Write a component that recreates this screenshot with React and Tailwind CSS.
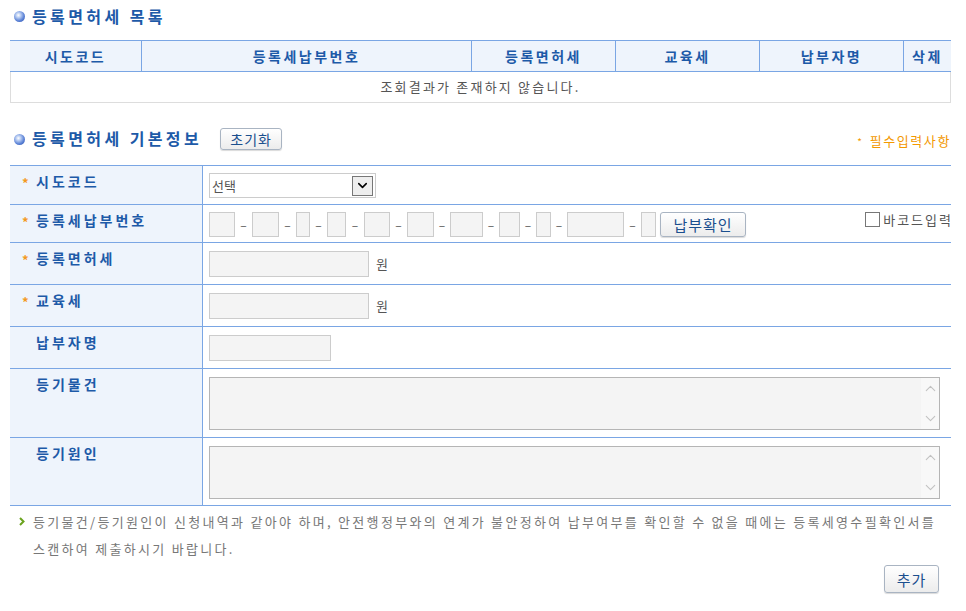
import React from "react";
import { ChevronDown, ChevronUp } from "lucide-react";

const cols = [
  { label: "시도코드", w: "w-[132px]" },
  { label: "등록세납부번호", w: "w-[330px]" },
  { label: "등록면허세", w: "w-[144px]" },
  { label: "교육세", w: "w-[144px]" },
  { label: "납부자명", w: "w-[144px]" },
  { label: "삭제", w: "w-[47px]" },
];

const boxes = [26, 27, 14, 19, 26, 27, 33, 21, 15, 57, 15];
const gaps = [17, 17, 17, 18, 17, 16, 16, 16, 16, 17];

function Bullet() {
  return (
    <span className="inline-block w-[11px] h-[11px] rounded-full bg-[radial-gradient(circle_at_40%_38%,#ffffff_0%,#b9cdf2_25%,#5b82d6_60%,#2a4fa8_100%)] shrink-0" />
  );
}

function Star() {
  return <span className="text-[#f39a1e] text-[13px] font-bold leading-none">*</span>;
}

function Btn({ children, className, style }) {
  return (
    <button
      style={style}
      className={
        "border border-[#a9b4c2] rounded-[3px] bg-[linear-gradient(#ffffff,#ececec)] shadow-[0_1px_1px_rgba(0,0,0,0.15)] text-[#1b4f8e] leading-none " +
        className
      }
    >
      {children}
    </button>
  );
}

function Input({ className, style }) {
  return <div style={style} className={"border border-[#cccccc] bg-[#f4f4f4] shrink-0 " + className} />;
}

function TextBox() {
  return (
    <div className="flex h-[53px] w-[731px] border border-[#b5b5b5] bg-[#f4f4f4]">
      <div className="flex-1" />
      <div className="w-[18px] bg-[#f8f8f8] flex flex-col items-center justify-between py-[2px]">
        <ChevronUp size={17} strokeWidth={1.5} className="text-[#c2c2c2]" />
        <ChevronDown size={17} strokeWidth={1.5} className="text-[#c2c2c2]" />
      </div>
    </div>
  );
}

function Row({ h, star, label, children }) {
  return (
    <div className={"flex border-b border-[#7aa6e4] " + h}>
      <div className="w-[193px] bg-[#eef4fc] border-r border-[#7aa6e4] flex items-start pl-[9px] pt-[6px]">
        <span className="w-[17px] leading-[18px] pl-[3px]">{star ? <Star /> : null}</span>
        <span className="text-[14px] font-bold leading-[18px] tracking-[3px] text-[#1d5aa8]">{label}</span>
      </div>
      <div className="flex-1 pl-[6px] pt-[7px]">{children}</div>
    </div>
  );
}

export default function App() {
  return (
    <div className="w-[966px] h-[611px] bg-white pl-[10px] pr-[15px] font-['Noto_Sans_CJK_KR',sans-serif]">
      <div className="flex items-center gap-[7px] h-[32px] pl-[4px]">
        <Bullet />
        <h2 className="text-[16px] font-bold tracking-[3.4px] text-[#1d5aa8] leading-none">등록면허세 목록</h2>
      </div>

      <div className="mt-[8px]">
        <div className="flex h-[32px] border-y border-[#7aa6e4] bg-[#eef4fc]">
          {cols.map((c, i) => (
            <div
              key={c.label}
              className={
                c.w +
                " flex items-center justify-center text-[14px] font-bold tracking-[2.5px] text-[#1d5aa8] " +
                (i < cols.length - 1 ? "border-r border-[#7aa6e4]" : "")
              }
            >
              {c.label}
            </div>
          ))}
        </div>
        <div className="h-[31px] border-x border-b border-[#dddddd] flex items-center justify-center text-[13px] tracking-[2.2px] text-[#555555]">
          조회결과가 존재하지 않습니다.
        </div>
      </div>

      <div className="flex items-center justify-between h-[24px] mt-[24px]">
        <div className="flex items-center gap-[7px] pl-[4px]">
          <Bullet />
          <h2 className="text-[16px] font-bold tracking-[3.4px] text-[#1d5aa8] leading-none -mt-[3px]">등록면허세 기본정보</h2>
          <Btn className="ml-[11px] w-[62px] h-[22px] text-[14px] tracking-[1px]">초기화</Btn>
        </div>
        <div className="text-[13px] text-[#f39800] tracking-[1.6px] pt-[4px]">
          <span className="text-[10px] mr-[6px]">*</span>필수입력사항
        </div>
      </div>

      <div className="mt-[14px] border-t border-[#7aa6e4]">
        <Row h="h-[39px]" star label="시도코드">
          <div className="flex items-center w-[167px] h-[25px] border border-[#cccccc] bg-white pl-[2px] pr-[2px]">
            <span className="flex-1 text-[13px] text-[#555555] leading-none">선택</span>
            <span className="w-[21px] h-[20px] border border-[#777777] bg-[#eeeeee] flex items-center justify-center">
              <ChevronDown size={15} strokeWidth={2.5} className="text-black" />
            </span>
          </div>
        </Row>
        <Row h="h-[38px]" star label="등록세납부번호">
          <div className="flex justify-between">
            <div className="flex items-center">
              {boxes.map((w, i) => (
                <React.Fragment key={i}>
                  <Input className="h-[25px]" style={{ width: w }} />
                  {i < gaps.length ? (
                    <span style={{ width: gaps[i] }} className="text-center text-[12px] text-[#555555]">
                      –
                    </span>
                  ) : null}
                </React.Fragment>
              ))}
              <Btn className="ml-[4px] w-[86px] h-[25px] text-[15px] tracking-[1px]">납부확인</Btn>
            </div>
            <label className="flex items-start gap-[3px] text-[13px] text-[#555555] leading-[15px] tracking-[2px] mr-[-2px]">
              <span className="w-[15px] h-[15px] border border-[#777777] bg-white" />
              바코드입력
            </label>
          </div>
        </Row>
        <Row h="h-[42px]" star label="등록면허세">
          <div className="flex items-center gap-[7px] pt-[1px]">
            <Input className="w-[160px] h-[26px]" />
            <span className="text-[13px] text-[#555555]">원</span>
          </div>
        </Row>
        <Row h="h-[42px]" star label="교육세">
          <div className="flex items-center gap-[7px] pt-[1px]">
            <Input className="w-[160px] h-[26px]" />
            <span className="text-[13px] text-[#555555]">원</span>
          </div>
        </Row>
        <Row h="h-[42px]" label="납부자명">
          <div className="pt-[1px]">
            <Input className="w-[122px] h-[26px]" />
          </div>
        </Row>
        <Row h="h-[69px]" label="등기물건">
          <div className="pt-[1px]">
            <TextBox />
          </div>
        </Row>
        <Row h="h-[68px]" label="등기원인">
          <div className="pt-[1px]">
            <TextBox />
          </div>
        </Row>
      </div>

      <div className="flex items-start pl-[9px] pt-[2px]">
        <span className="w-[14px] shrink-0 flex items-center h-[27px]">
          <svg width="6" height="9" viewBox="0 0 6 9">
            <path d="M1 1 L4.5 4.5 L1 8" fill="none" stroke="#6aa31e" strokeWidth="2" />
          </svg>
        </span>
        <p className="text-[13px] leading-[27px] tracking-[2.3px] text-[#777777] whitespace-nowrap">
          <span className="block">
            등기물건/등기원인이 신청내역과 같아야 하며, 안전행정부와의 연계가 불안정하여 납부여부를 확인할 수 없을 때에는 등록세영수필확인서를
          </span>
          <span className="block">스캔하여 제출하시기 바랍니다.</span>
        </p>
      </div>

      <div className="flex justify-end pr-[12px] mt-[3px]">
        <Btn className="w-[55px] h-[28px] text-[15px] tracking-[1px]">추가</Btn>
      </div>
    </div>
  );
}
